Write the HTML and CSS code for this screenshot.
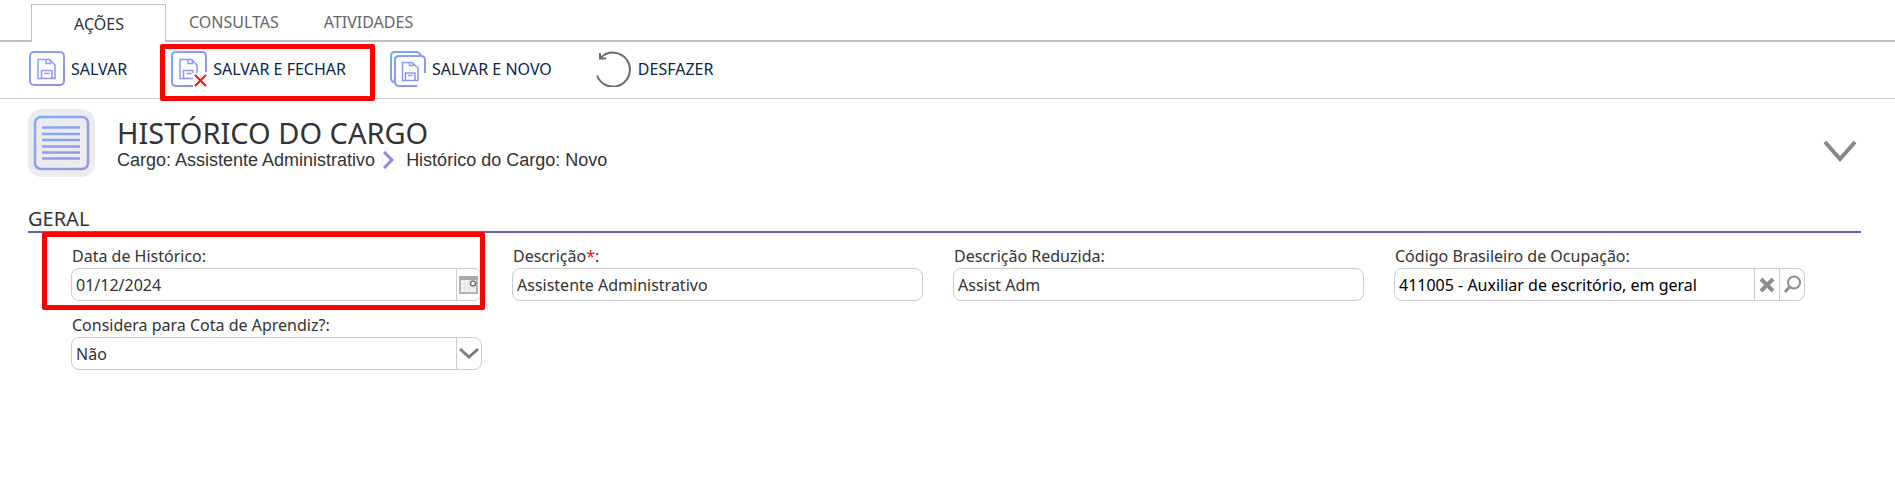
FILE: index.html
```html
<!DOCTYPE html>
<html lang="pt-BR">
<head>
<meta charset="UTF-8">
<meta name="viewport" content="width=device-width, initial-scale=1.0">
<title>Histórico do Cargo</title>
<link rel="stylesheet" href="styles.css">
</head>
<body>

<!-- Degradê usado pelos ícones -->
<svg class="defs" width="0" height="0" aria-hidden="true">
    <defs>
        <linearGradient id="azul" gradientUnits="userSpaceOnUse" x1="0" y1="0" x2="36" y2="36">
            <stop offset="0" stop-color="#76a9ff"/>
            <stop offset="0.6" stop-color="#9496ea"/>
            <stop offset="1" stop-color="#918de0"/>
        </linearGradient>
        <linearGradient id="azulGrande" gradientUnits="userSpaceOnUse" x1="6" y1="6" x2="62" y2="62">
            <stop offset="0" stop-color="#7cb0ff"/>
            <stop offset="1" stop-color="#9a90e2"/>
        </linearGradient>
    </defs>
</svg>

<nav class="tabs">
    <button class="tab active">AÇÕES</button>
    <button class="tab">CONSULTAS</button>
    <button class="tab">ATIVIDADES</button>
</nav>

<div class="toolbar">
    <button class="tool">
        <svg width="36" height="36" viewBox="0 0 36 36" fill="none" stroke="url(#azul)">
            <rect x="1" y="1" width="34" height="33" rx="4" stroke-width="2"/>
            <path d="M9 8.500H20.500L26 14V27.500H9Z" stroke-width="1.500"/>
            <path d="M17 9V12.500H21.500V9M12.500 27V19.500H23V27M15.500 22.500H20.500" stroke-width="1.500"/>
        </svg>
        <span>SALVAR</span>
    </button>
    <button class="tool marked">
        <svg width="36" height="36" viewBox="0 0 36 36" fill="none" stroke="url(#azul)">
            <path d="M22 35H5Q1 35 1 31V5Q1 1 5 1H31Q35 1 35 5V21" stroke-width="2"/>
            <path d="M22 27.500H9V8.500H20.500L26 14V22" stroke-width="1.500"/>
            <path d="M17 9V12.500H21.500V9M12.500 27V19.500H22V22M15.500 22.500H20.500" stroke-width="1.500"/>
            <path d="M24 24L35 35M35 24L24 35" stroke="#ff1111" stroke-width="2"/>
        </svg>
        <span>SALVAR E FECHAR</span>
    </button>
    <button class="tool">
        <svg width="36" height="36" viewBox="0 0 36 36" fill="none" stroke="url(#azul)" stroke-width="2">
            <path d="M5 31Q1 31 1 27V5Q1 1 5 1H26Q30 1 31 5"/>
            <path d="M27 35H9Q5 35 5 31V9Q5 5 9 5H31Q35 5 35 9V22"/>
            <path d="M12.500 11.500H22L28 17V29.500H12.500Z" stroke-width="1.500"/>
            <path d="M19.500 12V14.500H23.500V12M15.500 29V22H25V29M18 24.500H22.500" stroke-width="1.500"/>
        </svg>
        <span>SALVAR E NOVO</span>
    </button>
    <button class="tool">
        <svg width="36" height="36" viewBox="0 0 36 36" fill="none" stroke="#6b6b6b" stroke-width="2">
            <path d="M1 24.500A17 17 0 1 0 5 6.500"/>
            <path d="M4 2V7.500H10"/>
        </svg>
        <span>DESFAZER</span>
    </button>
</div>

<header class="page-header">
    <svg class="page-icon" width="68" height="68" viewBox="0 0 68 68" fill="none" stroke="url(#azulGrande)">
        <rect x="0" y="0" width="67" height="68" rx="14" fill="#ececec" stroke="none"/>
        <rect x="7" y="8" width="53" height="52" rx="6" stroke-width="2.500"/>
        <path d="M14 18.500H52M14 25H52M14 31H52M14 37.500H52M14 43.500H52M14 49.500H52" stroke-width="2.500"/>
    </svg>
    <div class="page-title">
        <h1>HISTÓRICO DO CARGO</h1>
        <div class="breadcrumb">
            <span>Cargo: Assistente Administrativo</span>
            <svg width="11" height="18" viewBox="0 0 11 18" fill="none" stroke="#8c88e8" stroke-width="3"><path d="M1 1L9 9L1 17"/></svg>
            <span>Histórico do Cargo: Novo</span>
        </div>
    </div>
    <button class="expand" aria-label="Expandir">
        <svg width="34" height="24" viewBox="0 0 34 24" fill="none" stroke="#868686" stroke-width="4"><path d="M2 2L17 19L32 2"/></svg>
    </button>
</header>

<section class="group">
    <h2>GERAL</h2>
    <form class="fields">
        <div class="field marked">
            <label for="data">Data de Histórico:</label>
            <div class="control">
                <input type="text" id="data" value="01/12/2024">
                <button type="button" class="addon" aria-label="Calendário">
                    <svg width="20" height="20" viewBox="0 0 20 20">
                        <rect x="1" y="2" width="17" height="16" fill="#f4f4f4" stroke="#b4b4b4" stroke-width="2"/>
                        <rect x="0" y="1" width="19" height="4" fill="#a9a9a9"/>
                        <path d="M6 5V17M10 5V17M2 9H17M2 13H17" stroke="#dedede"/>
                        <circle cx="14" cy="8.500" r="2.500" fill="#fff" stroke="#777" stroke-width="1.500"/>
                    </svg>
                </button>
            </div>
        </div>
        <div class="field">
            <label for="descricao">Descrição<span class="required">*</span>:</label>
            <div class="control">
                <input type="text" id="descricao" value="Assistente Administrativo">
            </div>
        </div>
        <div class="field">
            <label for="reduzida">Descrição Reduzida:</label>
            <div class="control">
                <input type="text" id="reduzida" value="Assist Adm">
            </div>
        </div>
        <div class="field">
            <label for="cbo">Código Brasileiro de Ocupação:</label>
            <div class="control">
                <input type="text" id="cbo" class="lookup" value="411005 - Auxiliar de escritório, em geral">
                <button type="button" class="addon" aria-label="Limpar">
                    <svg width="16" height="16" viewBox="0 0 16 16" stroke="#8d8d8d" stroke-width="4"><path d="M2 2L14 14M14 2L2 14"/></svg>
                </button>
                <button type="button" class="addon" aria-label="Pesquisar">
                    <svg width="19" height="19" viewBox="0 0 19 19" fill="none" stroke="#8d8d8d"><circle cx="11" cy="7.500" r="6" stroke-width="2"/><path d="M6.500 12L2 17" stroke-width="3"/></svg>
                </button>
            </div>
        </div>
        <div class="field">
            <label for="cota">Considera para Cota de Aprendiz?:</label>
            <div class="control">
                <select id="cota">
                    <option>Não</option>
                    <option>Sim</option>
                </select>
                <span class="addon">
                    <svg width="20" height="14" viewBox="0 0 20 14" fill="none" stroke="#7d7d7d" stroke-width="3"><path d="M1 2L10 10L19 2"/></svg>
                </span>
            </div>
        </div>
    </form>
</section>

</body>
</html>
```
FILE: styles.css
```css
* { box-sizing: border-box; }
body { margin: 0; background: #fff; color: #333; font-family: Tahoma, "Noto Sans", sans-serif; font-size: 16px; }
button, input, select { font-family: inherit; font-size: inherit; color: inherit; background: none; border: none; margin: 0; padding: 0; }
svg { display: block; flex: none; }
.defs { position: absolute; }

/* Abas */
.tabs { display: flex; height: 42px; padding: 4px 31px 0; border-bottom: 2px solid #c0c0c0; }
.tab { padding: 0 22px 0 23px; color: #666; }
.tab.active { width: 135px; height: 38px; color: #333; background: #fff; border: 1px solid #c0c0c0; border-bottom: none; }

/* Barra de ferramentas */
.toolbar { display: flex; align-items: flex-start; gap: 44px; height: 57px; padding: 9px 29px 0; border-bottom: 1px solid #ccc; }
.tool { position: relative; display: flex; align-items: center; gap: 6px; height: 36px; color: #0b2545; white-space: nowrap; }

/* Destaques em vermelho */
.marked { position: relative; }
.marked::after { content: ""; position: absolute; border: 5px solid #f00; border-radius: 2px; pointer-events: none; }
.tool.marked::after { top: -7px; right: -29px; bottom: -14px; left: -11px; }
.field.marked::after { top: -12px; right: -3px; bottom: -9px; left: -29px; }

/* Cabeçalho */
.page-header { display: flex; padding: 10px 38px 0 28px; }
.page-title { flex: 1; margin-left: 21px; padding-top: 5px; }
h1 { margin: 0; font-size: 29px; font-weight: normal; line-height: 37px; }
.breadcrumb { display: flex; align-items: center; gap: 8px; font-family: Arial, "Liberation Sans", sans-serif; font-size: 18px; line-height: 18px; }
.breadcrumb span:last-child { margin-left: 4px; }
.expand { align-self: center; padding-top: 18px; }

/* Grupo de campos */
.group { margin: 30px 34px 0 28px; }
h2 { margin: 0; border-bottom: 2px solid #6363b0; font-size: 20px; font-weight: normal; line-height: 24px; }
.fields { display: grid; grid-template-columns: repeat(4, 1fr); gap: 12px 30px; padding: 11px 56px 0 43px; }
.field { display: flex; flex-direction: column; }
.field label { padding-left: 1px; line-height: 24px; }
.required { color: #f00; }
.control { display: flex; height: 33px; border: 1px solid #ccc; border-radius: 8px; overflow: hidden; }
.control input, .control select { flex: 1; min-width: 0; padding: 0 4px; appearance: none; outline: none; }
.control .lookup { color: #000; }
.addon { display: flex; align-items: center; justify-content: center; width: 25px; border-left: 1px solid #ccc; }
```
